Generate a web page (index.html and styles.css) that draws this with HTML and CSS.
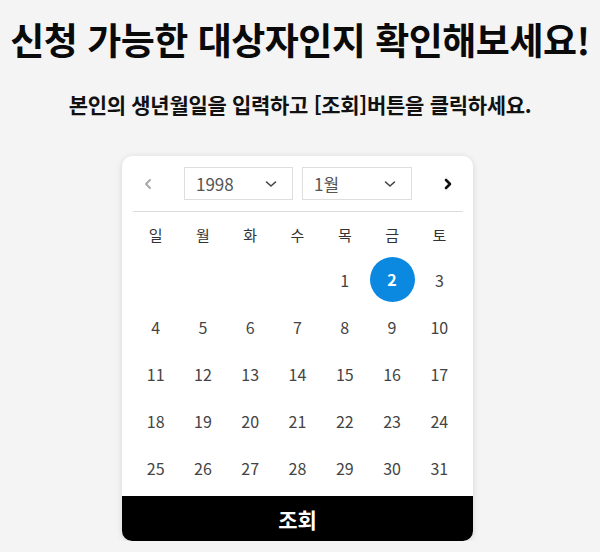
FILE: index.html
```html
<!DOCTYPE html>
<html lang="ko">
<head>
<meta charset="utf-8">
<title>대상자 확인</title>
<link rel="stylesheet" href="styles.css">
</head>
<body>
<main class="page">
  <h1 class="title">신청 가능한 대상자인지 확인해보세요!</h1>
  <p class="subtitle">본인의 생년월일을 입력하고 [조회]버튼을 클릭하세요.</p>
  <section class="card">
    <div class="cal-head">
      <button class="nav prev" aria-label="이전">
        <svg width="10" height="12" viewBox="0 0 10 12"><path d="M7 2 L3 6 L7 10" fill="none" stroke="#aaaaaa" stroke-width="2" stroke-linecap="round" stroke-linejoin="round"/></svg>
      </button>
      <div class="selects">
        <div class="select year"><span>1998</span>
          <svg width="12" height="8" viewBox="0 0 12 8"><path d="M1.5 2 L6 6 L10.5 2" fill="none" stroke="#444" stroke-width="1.6" stroke-linecap="round" stroke-linejoin="round"/></svg>
        </div>
        <div class="select month"><span>1월</span>
          <svg width="12" height="8" viewBox="0 0 12 8"><path d="M1.5 2 L6 6 L10.5 2" fill="none" stroke="#444" stroke-width="1.6" stroke-linecap="round" stroke-linejoin="round"/></svg>
        </div>
      </div>
      <button class="nav next" aria-label="다음">
        <svg width="10" height="12" viewBox="0 0 10 12"><path d="M3 2 L7 6 L3 10" fill="none" stroke="#111111" stroke-width="2.6" stroke-linecap="round" stroke-linejoin="round"/></svg>
      </button>
    </div>
    <div class="grid weekdays">
      <span>일</span><span>월</span><span>화</span><span>수</span><span>목</span><span>금</span><span>토</span>
    </div>
    <div class="grid days">
      <span></span><span></span><span></span><span></span>
      <span>1</span><span class="sel">2</span><span>3</span>
      <span>4</span><span>5</span><span>6</span><span>7</span><span>8</span><span>9</span><span>10</span>
      <span>11</span><span>12</span><span>13</span><span>14</span><span>15</span><span>16</span><span>17</span>
      <span>18</span><span>19</span><span>20</span><span>21</span><span>22</span><span>23</span><span>24</span>
      <span>25</span><span>26</span><span>27</span><span>28</span><span>29</span><span>30</span><span>31</span>
    </div>
    <button class="submit">조회</button>
  </section>
</main>
</body>
</html>
```
FILE: styles.css
```css
html, body {
  margin: 0;
  padding: 0;
}
body {
  background: #f4f4f4;
  font-family: "Noto Sans CJK KR", "Noto Sans", sans-serif;
  color: #111;
}
.page {
  display: flex;
  flex-direction: column;
  align-items: center;
  padding-top: 16px;
}
.title {
  margin: 0;
  font-size: 37px;
  line-height: 46px;
  font-weight: 700;
  letter-spacing: -0.5px;
  color: #0a0a0a;
}
.subtitle {
  margin: 27px 0 0;
  font-size: 21px;
  line-height: 30px;
  font-weight: 700;
  letter-spacing: -0.3px;
  color: #111;
}
.card {
  margin-top: 37px;
  margin-right: 5px;
  width: 351px;
  background: #fff;
  border-radius: 10px;
  box-shadow: 0 1px 6px rgba(0,0,0,0.13);
  display: flex;
  flex-direction: column;
  overflow: hidden;
}
.cal-head {
  margin: 11px 10px 0 11px;
  padding-bottom: 11px;
  border-bottom: 1px solid #dcdcdc;
  display: flex;
  justify-content: space-between;
  align-items: center;
}
.nav {
  width: 30px;
  height: 33px;
  border: 0;
  background: none;
  padding: 0;
  display: flex;
  align-items: center;
  justify-content: center;
}
.selects {
  display: flex;
  gap: 9px;
}
.select {
  box-sizing: border-box;
  height: 33px;
  border: 1px solid #dedede;
  display: flex;
  align-items: center;
  justify-content: space-between;
  padding: 0 15px 0 11px;
  font-size: 17px;
  color: #555;
}
.select.year { width: 109px; }
.select.month { width: 110px; }
.grid {
  display: grid;
  grid-template-columns: repeat(7, 1fr);
  margin: 0 10px;
}
.grid span {
  display: flex;
  align-items: center;
  justify-content: center;
}
.weekdays span {
  height: 44px;
  font-size: 15px;
  color: #333;
}
.days span {
  height: 47px;
  font-size: 16px;
  color: #444;
}
.days .sel {
  width: 45px;
  height: 45px;
  margin: 0 auto;
  border-radius: 50%;
  background: #0b88df;
  color: #fff;
  font-weight: 700;
  align-self: center;
  padding-bottom: 2px;
  box-sizing: border-box;
}
.submit {
  margin-top: 5px;
  height: 45px;
  border: 0;
  background: #000;
  color: #fff;
  font-family: "Noto Sans CJK KR", "Noto Sans", sans-serif;
  font-size: 21px;
  font-weight: 700;
  padding: 0;
}
```
